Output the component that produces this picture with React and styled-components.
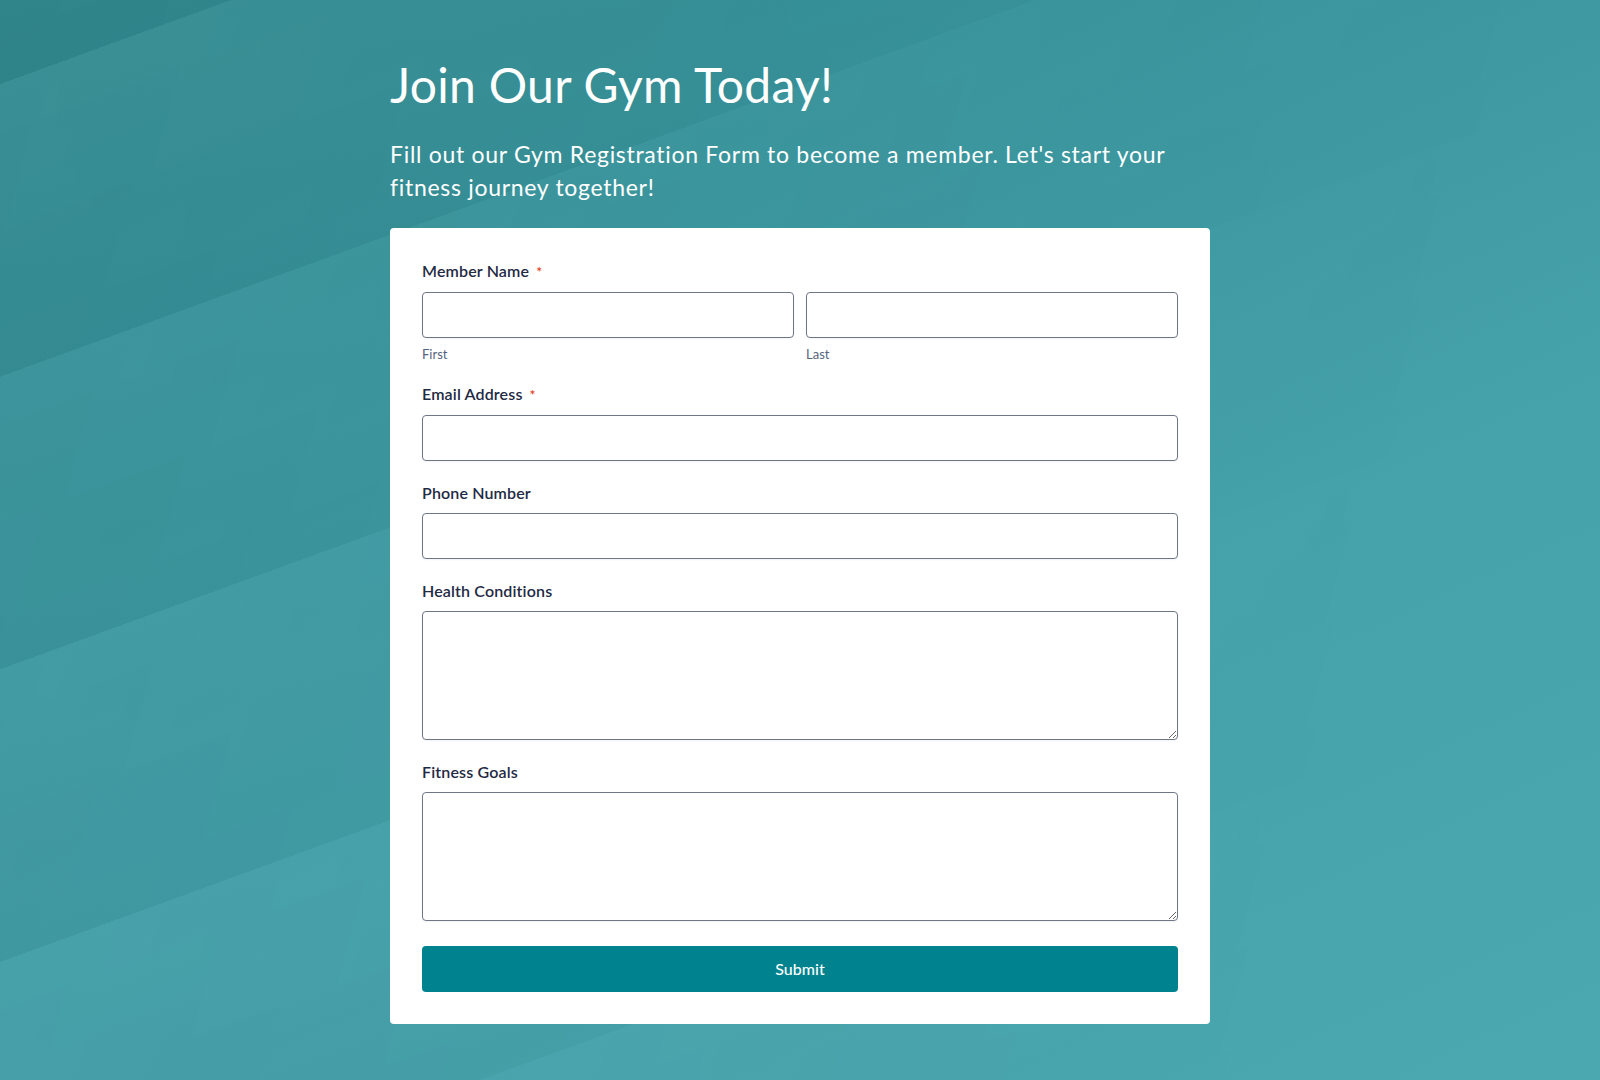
import React from 'react'
import styled, { createGlobalStyle } from 'styled-components'

const GlobalStyle = createGlobalStyle`
  * { box-sizing: border-box; }
  body {
    margin: 0;
    font-family: Lato, "Open Sans", sans-serif;
  }
`

const Page = styled.div`
  position: relative;
  min-height: 100vh;
  padding: 56px 0 56px;
  background: linear-gradient(155deg, #30898f 0%, #3a959d 30%, #45a1aa 60%, #4ba7b0 100%);

  &::before {
    content: '';
    position: absolute;
    inset: 0;
    background: repeating-linear-gradient(160deg, rgba(255,255,255,0.04) 79px, rgba(0,0,0,0.05) 354px);
    -webkit-mask-image: linear-gradient(105deg, #000 0%, rgba(0,0,0,0.55) 35%, rgba(0,0,0,0.15) 65%, transparent 85%);
    mask-image: linear-gradient(105deg, #000 0%, rgba(0,0,0,0.55) 35%, rgba(0,0,0,0.15) 65%, transparent 85%);
    pointer-events: none;
  }
`

const Column = styled.div`
  position: relative;
  z-index: 1;
  width: 820px;
  margin: 0 auto;
`

const Heading = styled.h1`
  margin: 0;
  font-size: 48px;
  line-height: 57.6px;
  font-weight: 400;
  letter-spacing: 0.3px;
  color: #fff;
`

const Intro = styled.p`
  margin: 24px 0 0;
  font-size: 23px;
  line-height: 33px;
  font-weight: 400;
  letter-spacing: 0.7px;
  color: #fff;
`

const Card = styled.form`
  margin-top: 24px;
  background: #fff;
  border-radius: 4px;
  padding: 31px 32px 32px;
  display: flex;
  flex-direction: column;
  gap: 20px;
`

const Field = styled.div`
  display: flex;
  flex-direction: column;
`

const Label = styled.label`
  font-size: 16px;
  line-height: 24px;
  font-weight: 600;
  letter-spacing: 0.15px;
  color: #1f2a44;
  margin-bottom: 8px;
`

const Required = styled.span`
  color: #e3421c;
  font-size: 14px;
  margin-left: 7px;
`

const NameRow = styled.div`
  display: grid;
  grid-template-columns: 1fr 1fr;
  gap: 12px;
`

const SubLabel = styled.span`
  display: block;
  margin-top: 8px;
  font-size: 13px;
  line-height: 16px;
  color: #57647e;
`

const Input = styled.input`
  display: block;
  width: 100%;
  height: 46px;
  padding: 0 12px;
  border: 1px solid #6f7686;
  border-radius: 4px;
  background: #fff;
  font-family: inherit;
  font-size: 16px;
  color: #2c3345;
  box-shadow: 0 1px 2px rgba(43, 51, 69, 0.06);
  outline: none;
`

const TextArea = styled.textarea`
  display: block;
  width: 100%;
  height: 129px;
  padding: 10px 12px;
  border: 1px solid #6f7686;
  border-radius: 4px;
  background: #fff;
  font-family: inherit;
  font-size: 16px;
  color: #2c3345;
  box-shadow: 0 1px 2px rgba(43, 51, 69, 0.06);
  outline: none;
  resize: vertical;
`

const SubmitButton = styled.button`
  margin-top: 5px;
  height: 46px;
  width: 100%;
  border: none;
  border-radius: 4px;
  background: #00838f;
  color: #fff;
  font-family: inherit;
  font-size: 16px;
  font-weight: 500;
  cursor: pointer;
`

function TextField({ label, required, type = 'text' }) {
  return (
    <Field>
      <Label>
        {label}
        {required && <Required>*</Required>}
      </Label>
      <Input type={type} />
    </Field>
  )
}

function AreaField({ label }) {
  return (
    <Field>
      <Label>{label}</Label>
      <TextArea />
    </Field>
  )
}

export default function App() {
  return (
    <Page>
      <GlobalStyle />
      <Column>
        <Heading>Join Our Gym Today!</Heading>
        <Intro>
          Fill out our Gym Registration Form to become a member. Let's start your fitness journey together!
        </Intro>
        <Card onSubmit={e => e.preventDefault()}>
          <Field>
            <Label>
              Member Name<Required>*</Required>
            </Label>
            <NameRow>
              <div>
                <Input />
                <SubLabel>First</SubLabel>
              </div>
              <div>
                <Input />
                <SubLabel>Last</SubLabel>
              </div>
            </NameRow>
          </Field>
          <TextField label="Email Address" type="email" required />
          <TextField label="Phone Number" type="tel" />
          <AreaField label="Health Conditions" />
          <AreaField label="Fitness Goals" />
          <SubmitButton type="submit">Submit</SubmitButton>
        </Card>
      </Column>
    </Page>
  )
}
